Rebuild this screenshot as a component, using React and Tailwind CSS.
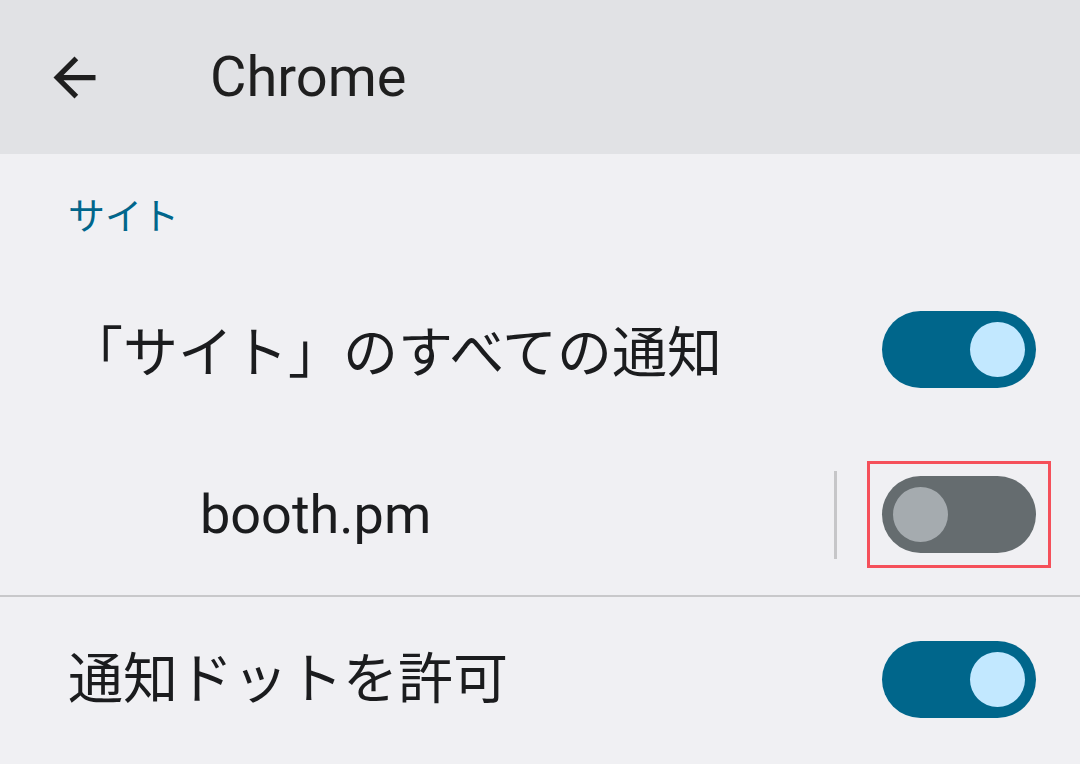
import React from 'react';

const font = { fontFamily: 'Roboto, "Noto Sans CJK JP", sans-serif' };

function Toggle({ on, className = '' }) {
  return (
    <div
      className={`flex items-center w-[154px] h-[77px] rounded-full px-[11px] ${
        on ? 'bg-[#00668b] justify-end' : 'bg-[#656c6f] justify-start'
      } ${className}`}
    >
      <div className={`w-[55px] h-[55px] rounded-full ${on ? 'bg-[#c2e8ff]' : 'bg-[#a5abaf]'}`} />
    </div>
  );
}

function BackArrow() {
  return (
    <svg viewBox="0 0 24 24" className="w-[63px] h-[63px]" fill="#1f1f1f">
      <path d="M20 11H7.83l5.59-5.59L12 4l-8 8 8 8 1.41-1.41L7.83 13H20v-2z" />
    </svg>
  );
}

export default function App() {
  return (
    <div className="w-[1080px] h-[764px] bg-[#f0f0f3] overflow-hidden text-[#1b1c1e]" style={font}>
      <header className="h-[154px] bg-[#e1e2e5] flex items-center pl-[43px]">
        <BackArrow />
        <span className="ml-[104px] text-[56px] text-[#1f1f1f]">Chrome</span>
      </header>

      <div className="h-[118px] flex items-center pl-[68px] pt-[10px]">
        <span className="text-[37px] text-[#00668b]">サイト</span>
      </div>

      <div className="h-[162px] flex items-center justify-between pl-[68px] pr-[44px]">
        <span className="text-[55px]">「サイト」のすべての通知</span>
        <Toggle on className="mb-[8px]" />
      </div>

      <div className="h-[161px] flex items-center pl-[200px] pr-[29px]">
        <span className="flex-1 text-[54px]">booth.pm</span>
        <div className="w-[3px] h-[88px] bg-[#c6c6c8]" />
        <div className="ml-[30px] border-[3px] border-[#f5505a] p-3">
          <Toggle on={false} />
        </div>
      </div>

      <div className="h-[2px] bg-[#c8c8ca]" />

      <div className="h-[165px] flex items-center justify-between pl-[68px] pr-[44px]">
        <span className="text-[55px]">通知ドットを許可</span>
        <Toggle on />
      </div>
    </div>
  );
}
